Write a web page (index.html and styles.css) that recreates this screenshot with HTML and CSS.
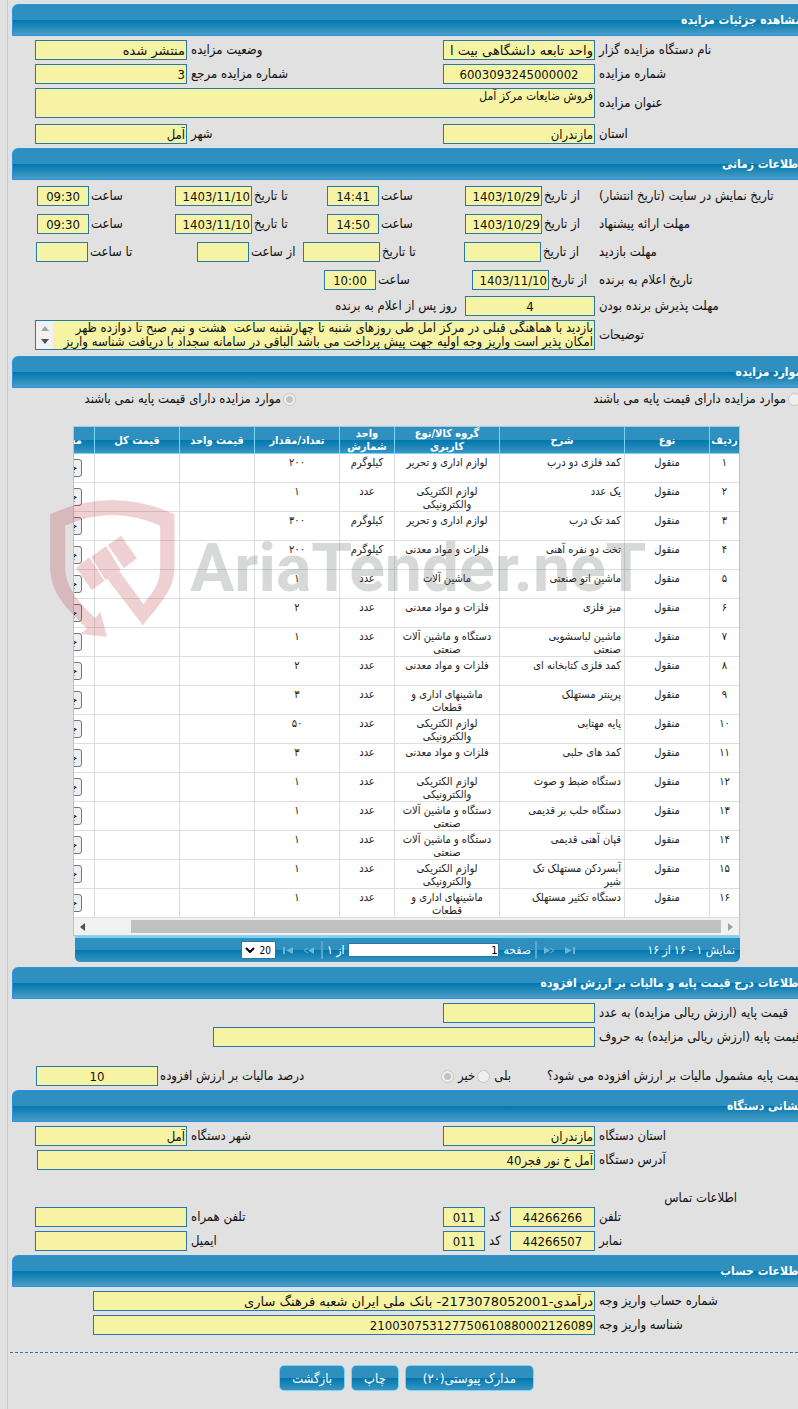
FILE: index.html
```
<!DOCTYPE html>
<html lang="fa">
<head>
    <meta charset="UTF-8">
    <meta name="viewport" content="width=device-width, initial-scale=1.0">
    <title>مشاهده جزئیات مزایده</title>
    <link rel="stylesheet" href="styles.css">
</head>
<body>
<form class="page" dir="rtl">

    <!-- جزئیات مزایده -->
    <h2 class="section-title">مشاهده جزئیات مزایده</h2>
    <div class="section">
        <div class="row">
            <label class="main-label" for="org">نام دستگاه مزایده گزار</label>
            <input class="field fa" id="org" type="text" value="واحد تابعه دانشگاهی بیت ا" readonly>
            <label class="side-label" for="status">وضعیت مزایده</label>
            <input class="field fa" id="status" type="text" value="منتشر شده" readonly>
        </div>
        <div class="row">
            <label class="main-label" for="number">شماره مزایده</label>
            <input class="field center" id="number" type="text" value="6003093245000002" readonly>
            <label class="side-label" for="refNumber">شماره مزایده مرجع</label>
            <input class="field" id="refNumber" type="text" value="3" readonly>
        </div>
        <div class="row">
            <label class="main-label" for="subject">عنوان مزایده</label>
            <textarea class="field wide" id="subject" readonly>فروش ضایعات مرکز آمل</textarea>
        </div>
        <div class="row spaced">
            <label class="main-label" for="province">استان</label>
            <input class="field" id="province" type="text" value="مازندران" readonly>
            <label class="side-label" for="city">شهر</label>
            <input class="field" id="city" type="text" value="آمل" readonly>
        </div>
    </div>

    <!-- اطلاعات زمانی -->
    <h2 class="section-title">اطلاعات زمانی</h2>
    <div class="section times">
        <div class="dates">
            <span class="caption">تاریخ نمایش در سایت (تاریخ انتشار)</span>
            <label for="showFrom">از تاریخ</label>
            <input class="field" id="showFrom" type="text" value="1403/10/29" readonly>
            <label for="showFromTime">ساعت</label>
            <input class="field center" id="showFromTime" type="text" value="14:41" readonly>
            <label for="showTo">تا تاریخ</label>
            <input class="field" id="showTo" type="text" value="1403/11/10" readonly>
            <label for="showToTime">ساعت</label>
            <input class="field center" id="showToTime" type="text" value="09:30" readonly>
        </div>
        <div class="dates">
            <span class="caption">مهلت ارائه پیشنهاد</span>
            <label for="offerFrom">از تاریخ</label>
            <input class="field" id="offerFrom" type="text" value="1403/10/29" readonly>
            <label for="offerFromTime">ساعت</label>
            <input class="field center" id="offerFromTime" type="text" value="14:50" readonly>
            <label for="offerTo">تا تاریخ</label>
            <input class="field" id="offerTo" type="text" value="1403/11/10" readonly>
            <label for="offerToTime">ساعت</label>
            <input class="field center" id="offerToTime" type="text" value="09:30" readonly>
        </div>
        <div class="dates visit">
            <span class="caption">مهلت بازدید</span>
            <label for="visitFrom">از تاریخ</label>
            <input class="field" id="visitFrom" type="text" readonly>
            <label for="visitTo">تا تاریخ</label>
            <input class="field" id="visitTo" type="text" readonly>
            <label for="visitFromTime">از ساعت</label>
            <input class="field" id="visitFromTime" type="text" readonly>
            <label for="visitToTime">تا ساعت</label>
            <input class="field" id="visitToTime" type="text" readonly>
        </div>
        <div class="dates winner">
            <span class="caption">تاریخ اعلام به برنده</span>
            <label for="winnerDate">از تاریخ</label>
            <input class="field" id="winnerDate" type="text" value="1403/11/10" readonly>
            <label for="winnerTime">ساعت</label>
            <input class="field center" id="winnerTime" type="text" value="10:00" readonly>
        </div>
    </div>
    <div class="section notes">
        <div class="row">
            <label class="main-label" for="accept">مهلت پذیرش برنده بودن</label>
            <input class="field accept center" id="accept" type="text" value="4" readonly>
            <span class="after-field">روز پس از اعلام به برنده</span>
        </div>
        <div class="row">
            <label class="main-label" for="notes">توضیحات</label>
            <div class="notes-box wide">
                <textarea class="notes-text" id="notes" readonly>بازدید با هماهنگی قبلی در مرکز آمل طی روزهای شنبه تا چهارشنبه ساعت  هشت و نیم صبح تا دوازده ظهر
امکان پذیر است واریز وجه اولیه جهت پیش پرداخت می باشد الباقی در سامانه سجداد با دریافت شناسه واریز</textarea>
                <span class="notes-scroll">
                    <svg width="8" height="5" viewBox="0 0 8 5"><path d="M4 0L8 5H0z" fill="#a3a3a3"/></svg>
                    <svg width="8" height="5" viewBox="0 0 8 5"><path d="M0 0H8L4 5z" fill="#505050"/></svg>
                </span>
            </div>
        </div>
    </div>

    <!-- موارد مزایده -->
    <h2 class="section-title">موارد مزایده</h2>
    <div class="choices">
        <label class="choice first"><input class="radio" type="radio" name="hasBase" disabled>موارد مزایده دارای قیمت پایه می باشند</label>
        <label class="choice second"><input class="radio" type="radio" name="hasBase" checked disabled>موارد مزایده دارای قیمت پایه نمی باشند</label>
    </div>

    <div class="grid">
        <div class="grid-view">
            <table class="items">
                <colgroup>
                    <col class="c-row"><col class="c-type"><col class="c-desc"><col class="c-group"><col class="c-unit">
                    <col class="c-count"><col class="c-price"><col class="c-total"><col class="c-docs">
                </colgroup>
                <thead>
                    <tr><th>ردیف</th><th>نوع</th><th>شرح</th><th class="group">گروه کالا/نوع کاربری</th><th>واحد شمارش</th><th>تعداد/مقدار</th><th>قیمت واحد</th><th>قیمت کل</th><th class="docs">مستندات</th></tr>
                </thead>
                <tbody>
                    <tr><td>۱</td><td>منقول</td><td class="desc">کمد فلزی دو درب</td><td>لوازم اداری و تحریر</td><td>کیلوگرم</td><td>۲۰۰</td><td></td><td></td><td class="docs"><button class="detail" type="button">جزئیات</button></td></tr>
                    <tr><td>۲</td><td>منقول</td><td class="desc">یک عدد</td><td>لوازم الکتریکی والکترونیکی</td><td>عدد</td><td>۱</td><td></td><td></td><td class="docs"><button class="detail" type="button">جزئیات</button></td></tr>
                    <tr><td>۳</td><td>منقول</td><td class="desc">کمد تک درب</td><td>لوازم اداری و تحریر</td><td>کیلوگرم</td><td>۳۰۰</td><td></td><td></td><td class="docs"><button class="detail" type="button">جزئیات</button></td></tr>
                    <tr><td>۴</td><td>منقول</td><td class="desc">تخت دو نفره آهنی</td><td>فلزات و مواد معدنی</td><td>کیلوگرم</td><td>۲۰۰</td><td></td><td></td><td class="docs"><button class="detail" type="button">جزئیات</button></td></tr>
                    <tr><td>۵</td><td>منقول</td><td class="desc">ماشین اتو صنعتی</td><td>ماشین آلات</td><td>عدد</td><td>۱</td><td></td><td></td><td class="docs"><button class="detail" type="button">جزئیات</button></td></tr>
                    <tr><td>۶</td><td>منقول</td><td class="desc">میز فلزی</td><td>فلزات و مواد معدنی</td><td>عدد</td><td>۲</td><td></td><td></td><td class="docs"><button class="detail" type="button">جزئیات</button></td></tr>
                    <tr><td>۷</td><td>منقول</td><td class="desc">ماشین لباسشویی صنعتی</td><td>دستگاه و ماشین آلات صنعتی</td><td>عدد</td><td>۱</td><td></td><td></td><td class="docs"><button class="detail" type="button">جزئیات</button></td></tr>
                    <tr><td>۸</td><td>منقول</td><td class="desc">کمد فلزی کتابخانه ای</td><td>فلزات و مواد معدنی</td><td>عدد</td><td>۲</td><td></td><td></td><td class="docs"><button class="detail" type="button">جزئیات</button></td></tr>
                    <tr><td>۹</td><td>منقول</td><td class="desc">پرینتر مستهلک</td><td>ماشینهای اداری و قطعات</td><td>عدد</td><td>۳</td><td></td><td></td><td class="docs"><button class="detail" type="button">جزئیات</button></td></tr>
                    <tr><td>۱۰</td><td>منقول</td><td class="desc">پایه مهتابی</td><td>لوازم الکتریکی والکترونیکی</td><td>عدد</td><td>۵۰</td><td></td><td></td><td class="docs"><button class="detail" type="button">جزئیات</button></td></tr>
                    <tr><td>۱۱</td><td>منقول</td><td class="desc">کمد های حلبی</td><td>فلزات و مواد معدنی</td><td>عدد</td><td>۳</td><td></td><td></td><td class="docs"><button class="detail" type="button">جزئیات</button></td></tr>
                    <tr><td>۱۲</td><td>منقول</td><td class="desc">دستگاه ضبط و صوت</td><td>لوازم الکتریکی والکترونیکی</td><td>عدد</td><td>۱</td><td></td><td></td><td class="docs"><button class="detail" type="button">جزئیات</button></td></tr>
                    <tr><td>۱۳</td><td>منقول</td><td class="desc">دستگاه حلب بر قدیمی</td><td>دستگاه و ماشین آلات صنعتی</td><td>عدد</td><td>۱</td><td></td><td></td><td class="docs"><button class="detail" type="button">جزئیات</button></td></tr>
                    <tr><td>۱۴</td><td>منقول</td><td class="desc">قپان آهنی قدیمی</td><td>دستگاه و ماشین آلات صنعتی</td><td>عدد</td><td>۱</td><td></td><td></td><td class="docs"><button class="detail" type="button">جزئیات</button></td></tr>
                    <tr><td>۱۵</td><td>منقول</td><td class="desc">آبسردکن مستهلک تک شیر</td><td>لوازم الکتریکی والکترونیکی</td><td>عدد</td><td>۱</td><td></td><td></td><td class="docs"><button class="detail" type="button">جزئیات</button></td></tr>
                    <tr><td>۱۶</td><td>منقول</td><td class="desc">دستگاه تکثیر مستهلک</td><td>ماشینهای اداری و قطعات</td><td>عدد</td><td>۱</td><td></td><td></td><td class="docs"><button class="detail" type="button">جزئیات</button></td></tr>
                </tbody>
            </table>
            <div class="scrollbar">
                <svg width="5" height="8" viewBox="0 0 5 8"><path d="M0 0L5 4L0 8z" fill="#a3a3a3"/></svg>
                <span class="thumb"></span>
                <svg width="5" height="8" viewBox="0 0 5 8"><path d="M5 0L0 4L5 8z" fill="#505050"/></svg>
            </div>
        </div>
        <div class="pager">
            <span class="pager-info">نمایش ۱ - ۱۶ از ۱۶</span>
            <div class="pager-nav">
                <svg width="10" height="7" viewBox="0 0 10 7" fill="#6db4d8"><path d="M0 0L7 3.500L0 7z"/><path d="M8 0H10V7H8z"/></svg>
                <svg width="11" height="7" viewBox="0 0 11 7" fill="#6db4d8"><path d="M0 0L6 3.500L0 7z"/><path d="M6 1L10 3.500L6 6" fill="none" stroke="#6db4d8"/></svg>
                <span class="sep"></span>
                <label for="pageNo">صفحه</label>
                <input class="page-no" id="pageNo" type="text" value="1">
                <span>از ۱</span>
                <span class="sep"></span>
                <svg width="11" height="7" viewBox="0 0 11 7" fill="#6db4d8"><path d="M11 0L5 3.500L11 7z"/><path d="M5 1L1 3.500L5 6" fill="none" stroke="#6db4d8"/></svg>
                <svg width="10" height="7" viewBox="0 0 10 7" fill="#6db4d8"><path d="M10 0L3 3.500L10 7z"/><path d="M0 0H2V7H0z"/></svg>
                <span class="size-box">
                    <select class="page-size" aria-label="تعداد ردیف"><option>20</option></select>
                    <svg class="size-arrow" width="10" height="6" viewBox="0 0 10 6"><path d="M1 1L5 5L9 1" fill="none" stroke="#000" stroke-width="2"/></svg>
                </span>
            </div>
        </div>

        <div class="watermark" dir="ltr">
            <svg class="shield" viewBox="150 240 374 411" fill="#b41e2d">
                <path d="M150 283Q335 197 523 283V440C523 510 480 550 428 616L322 478L355 450L430 553C462 510 480 490 480 440V317Q335 253 195 317V440C195 500 235 545 285 594L301 575L320 650L242 642L260 625C200 565 150 520 150 440z"/>
                <path d="M363 347L410 415L371 445L323 375zM318 378L362 450L316 480L273 410zM267 412L313 482L275 510L228 443z"/>
            </svg>
            <span class="brand">AriaTender.neT</span>
        </div>
    </div>

    <!-- قیمت پایه و مالیات -->
    <h2 class="section-title">اطلاعات درج قیمت پایه و مالیات بر ارزش افزوده</h2>
    <div class="section">
        <div class="row">
            <label class="main-label" for="baseNumber">قیمت پایه (ارزش ریالی مزایده) به عدد</label>
            <input class="field" id="baseNumber" type="text" readonly>
            <span class="rest"></span>
        </div>
        <div class="row">
            <label class="main-label" for="baseWords">قیمت پایه (ارزش ریالی مزایده) به حروف</label>
            <input class="field words" id="baseWords" type="text" readonly>
            <span class="words-rest"></span>
        </div>
        <div class="row tax">
            <span class="tax-question">قیمت پایه مشمول مالیات بر ارزش افزوده می شود؟</span>
            <label class="tax-yes">بلی <input class="radio" type="radio" name="tax" disabled></label>
            <label class="tax-no">خیر <input class="radio" type="radio" name="tax" checked disabled></label>
            <label class="tax-label" for="taxRate">درصد مالیات بر ارزش افزوده</label>
            <input class="field rate center" id="taxRate" type="text" value="10" readonly>
        </div>
    </div>

    <!-- نشانی دستگاه -->
    <h2 class="section-title">نشانی دستگاه</h2>
    <div class="section">
        <div class="row">
            <label class="main-label" for="orgProvince">استان دستگاه</label>
            <input class="field" id="orgProvince" type="text" value="مازندران" readonly>
            <label class="side-label" for="orgCity">شهر دستگاه</label>
            <input class="field" id="orgCity" type="text" value="آمل" readonly>
        </div>
        <div class="row address">
            <label class="main-label" for="address">آدرس دستگاه</label>
            <input class="field" id="address" type="text" value="آمل خ نور فجر40" readonly>
        </div>
        <p class="contact-title">اطلاعات تماس</p>
        <div class="row">
            <label class="main-label" for="phone">تلفن</label>
            <input class="field phone center" id="phone" type="text" value="44266266" readonly>
            <label class="code-label" for="phoneCode">کد</label>
            <input class="field code center" id="phoneCode" type="text" value="011" readonly>
            <label class="side-label" for="mobile">تلفن همراه</label>
            <input class="field" id="mobile" type="text" readonly>
        </div>
        <div class="row">
            <label class="main-label" for="fax">نمابر</label>
            <input class="field phone center" id="fax" type="text" value="44266507" readonly>
            <label class="code-label" for="faxCode">کد</label>
            <input class="field code center" id="faxCode" type="text" value="011" readonly>
            <label class="side-label" for="email">ایمیل</label>
            <input class="field" id="email" type="text" readonly>
        </div>
    </div>

    <!-- اطلاعات حساب -->
    <h2 class="section-title">اطلاعات حساب</h2>
    <div class="section account">
        <div class="row">
            <label class="main-label" for="account">شماره حساب واریز وجه</label>
            <input class="field fa account-field" id="account" type="text" value="درآمدی-2173078052001- بانک ملی ایران شعبه فرهنگ ساری" readonly>
        </div>
        <div class="row">
            <label class="main-label" for="paymentId">شناسه واریز وجه</label>
            <input class="field account-field" id="paymentId" type="text" value="210030753127750610880002126089" readonly>
        </div>
    </div>

    <div class="buttons">
        <button class="btn attachments" type="button">مدارک پیوستی(۲۰)</button>
        <button class="btn" type="button">چاپ</button>
        <button class="btn" type="button">بازگشت</button>
    </div>
</form>
</body>
</html>
```
FILE: styles.css
```
* {
    box-sizing: border-box;
}
html {
    background-color: #e1e1e1;
}
body {
    margin: 0;
    overflow-x: hidden;
    font-family: "DejaVu Sans Condensed", "DejaVu Sans", Tahoma, sans-serif;
    font-size: 13px;
    line-height: 16px;
    color: #111;
}
input, textarea, select, button {
    font-family: inherit;
    margin: 0;
}
/* the panel runs a little past the right side of the window */
.page {
    margin: 0 -10px 0 7px;
    padding: 4px 0 18px 4px;
    border-left: 1px solid #c8c8c8;
}

/* section bars */
.section-title {
    height: 32px;
    margin: 0;
    padding: 0 5px;
    border: 1px solid #2b91e3;
    border-top-left-radius: 6px;
    background: linear-gradient(#2f90bf 50%, #0077ae 50%, #4a9dc5);
    color: #fff;
    font-size: 12px;
    font-weight: bold;
    line-height: 30px;
}

/* form rows */
.section {
    display: flex;
    flex-direction: column;
    gap: 4px;
    padding: 4px 0 4px 23px;
}
.row {
    display: flex;
    align-items: center;
    gap: 4px;
}
.row.spaced {
    margin-top: 2px;
}
.main-label {
    flex: 1;
    text-align: left;
    white-space: nowrap;
}
.side-label {
    flex: 0 1 248px;
    text-align: left;
}
.field {
    width: 152px;
    height: 20px;
    padding: 0 1px;
    border: 1px solid #2779aa;
    border-radius: 0;
    background-color: #f6f4a4;
    color: #111;
    font-size: 13px;
    outline: none;
}
.fa {
    font-family: "DejaVu Sans", Tahoma, sans-serif;
}
.center {
    text-align: center;
}
.wide {
    width: 560px;
}
textarea.field {
    height: 30px;
    font-size: 12px;
    line-height: 14px;
    resize: none;
    overflow: hidden;
    display: block;
}

/* dates */
.times {
    gap: 8px;
    padding-top: 6px;
    padding-bottom: 2px;
}
.dates {
    display: grid;
    grid-template-columns: 1fr 53px 77px 82px 52px 71px 77px 82px 52px;
    gap: 2px;
    align-items: center;
    padding-left: 2px;
    text-align: left;
    white-space: nowrap;
}
.dates .field {
    width: 100%;
}
.dates.visit {
    grid-template-columns: 1fr 54px 77px 80px 77px 50px 52px 105px 52px;
    padding-left: 1px;
}
.dates.winner {
    grid-template-columns: 1fr 46px 77px 92px 52px 285px;
}
.notes {
    padding-bottom: 6px;
}
.accept {
    width: 130px;
}
.after-field {
    flex: 0 0 426px;
    padding-right: 4px;
}
.notes-box {
    display: flex;
    height: 30px;
    border: 1px solid #2779aa;
    background-color: #f6f4a4;
}
.notes-text {
    flex: 1;
    min-width: 0;
    height: 28px;
    padding: 0 1px;
    border: 0;
    background: none;
    color: #111;
    font-size: 13px;
    line-height: 14px;
    white-space: pre;
    overflow: hidden;
    resize: none;
    outline: none;
}
.notes-scroll {
    display: flex;
    flex-direction: column;
    justify-content: space-between;
    align-items: center;
    width: 17px;
    padding: 5px 0;
    background-color: #f1f1f1;
}

/* radios */
.radio {
    appearance: none;
    flex: none;
    width: 13px;
    height: 13px;
    margin: 0;
    border: 1px solid #c6c6c6;
    border-radius: 50%;
    background-color: #efefef;
    vertical-align: middle;
}
.radio:checked {
    background: radial-gradient(circle, #c3c3c3 0 3px, #efefef 4px);
}
.choices {
    display: flex;
    padding: 4px 7px 0 12px;
}
.choice {
    display: flex;
    align-items: center;
    gap: 2px;
    height: 14px;
}
.first {
    flex: 1;
}
.second {
    width: 272px;
}

/* items grid */
.grid {
    position: relative;
    margin: 20px 68px 5px 61px;
}
.grid-view {
    overflow: hidden;
    border: 1px solid #a6c9e2;
    background-color: #fff;
}
.items {
    width: 730px;
    table-layout: fixed;
    border-collapse: separate;
    border-spacing: 0;
}
.c-row { width: 30px; }
.c-type { width: 85px; }
.c-desc { width: 125px; }
.c-group { width: 105px; }
.c-unit { width: 55px; }
.c-count { width: 85px; }
.c-price { width: 75px; }
.c-total { width: 85px; }
.c-docs { width: 85px; }
.items th {
    height: 27px;
    padding: 0;
    border-left: 1px solid #77d5f7;
    border-bottom: 1px solid #77d5f7;
    background: linear-gradient(#2f90bf 50%, #0077ae 50%, #3a94c2);
    color: #fff;
    font-size: 11px;
    line-height: 13px;
}
.items .group {
    padding: 0 8px;
}
.items td {
    height: 29px;
    padding: 2px 2px 0;
    border-left: 1px solid #ddd;
    border-bottom: 1px solid #ddd;
    color: #222;
    font-size: 11px;
    line-height: 13px;
    text-align: center;
    vertical-align: top;
}
.items .desc {
    padding-right: 3px;
    padding-left: 22px;
    text-align: right;
}
.items .docs {
    padding-right: 12px;
    text-align: right;
}
.detail {
    height: 18px;
    margin-top: 3px;
    padding: 0 4px;
    border: 1px solid #767676;
    border-radius: 3px;
    background-color: #efefef;
    color: #000;
    font-size: 11px;
    line-height: 14px;
}
.scrollbar {
    display: flex;
    align-items: center;
    gap: 7px;
    height: 17px;
    padding: 0 6px;
    background-color: #f1f1f1;
}
.thumb {
    flex: 1;
    height: 13px;
    margin-left: 39px;
    background-color: #c1c1c1;
}
.pager {
    display: flex;
    align-items: center;
    justify-content: space-between;
    height: 26px;
    margin-left: 2px;
    padding: 0 5px 0 166px;
    border-top: 2px solid #77d5f7;
    border-radius: 0 0 5px 5px;
    background: linear-gradient(#2f90bf 50%, #0077ae 50%, #3a94c2);
    color: #fff;
    font-size: 12px;
}
.pager-nav {
    display: flex;
    align-items: center;
    gap: 4px;
}
.pager-nav svg {
    margin: 0 3px;
}
.sep {
    width: 2px;
    height: 18px;
    background-color: #5ba6cc;
}
.page-no {
    width: 151px;
    height: 14px;
    padding: 0 1px;
    border: 1px solid #2779aa;
    background-color: #fff;
    font-size: 11px;
}
.size-box {
    position: relative;
}
.page-size {
    display: block;
    width: 35px;
    height: 18px;
    padding: 0 4px;
    border: 1px solid #2779aa;
    border-radius: 0;
    background-color: #fff;
    appearance: none;
    color: #000;
    font-size: 10px;
}
.size-box .size-arrow {
    position: absolute;
    left: 1px;
    top: 6px;
    pointer-events: none;
}

.watermark {
    position: absolute;
    left: -23px;
    top: 74px;
    display: flex;
    align-items: center;
    gap: 15px;
    pointer-events: none;
}
.shield {
    width: 125px;
    height: 137px;
    opacity: 0.2;
}
.brand {
    color: rgba(95, 100, 100, 0.25);
    font-family: Roboto, "Liberation Sans", sans-serif;
    font-size: 66px;
    font-weight: bold;
    line-height: 80px;
}

/* tax */
.words {
    width: 382px;
}
.rest {
    width: 404px;
}
.words-rest {
    width: 174px;
}
.row.tax {
    gap: 2px;
    margin-top: 15px;
    padding-left: 1px;
    white-space: nowrap;
}
.tax-question {
    flex: 1;
    text-align: left;
}
.tax-yes, .tax-no {
    display: flex;
    align-items: center;
    gap: 4px;
}
.tax-yes {
    margin-right: 34px;
}
.tax-label {
    width: 279px;
    text-align: left;
}
.rate {
    width: 122px;
}

/* address */
.address {
    padding-left: 2px;
}
.address .field {
    width: 558px;
}
.contact-title {
    margin: 16px 71px 0 0;
    height: 13px;
    line-height: 16px;
}
.phone {
    width: 85px;
}
.code {
    width: 42px;
}
.code-label {
    width: 17px;
    text-align: left;
}
.account-field {
    width: 502px;
}
.account {
    padding-left: 81px;
}

.buttons {
    display: flex;
    justify-content: center;
    gap: 6px;
    margin: 13px 0 0 -2px;
    padding: 12px 5px 0 0;
    border-top: 1px dashed #2779aa;
}
.btn {
    height: 26px;
    padding: 0 12px;
    border: 1px solid #77d5f7;
    border-radius: 5px;
    background: linear-gradient(#2f90bf 50%, #0077ae 50%, #3a94c2);
    color: #fff;
    font-size: 13px;
}
.attachments {
    min-width: 129px;
}
```
